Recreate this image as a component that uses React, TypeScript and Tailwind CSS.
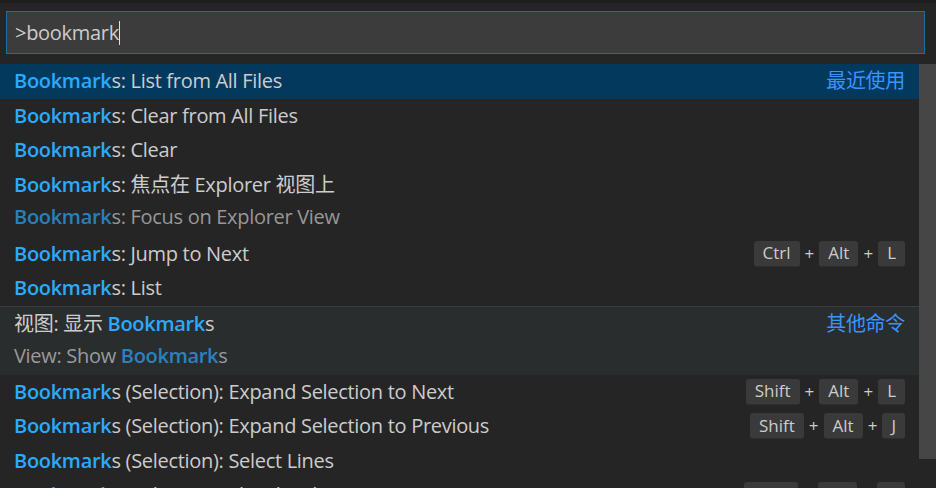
import React from 'react';

type Item = {
  pre?: string;
  hl: string;
  post: string;
  detail?: { pre: string; hl: string; post: string };
  keys?: string[];
  label?: string;
  selected?: boolean;
  hover?: boolean;
  separator?: boolean;
};

const items: Item[] = [
  { hl: 'Bookmark', post: 's: List from All Files', label: '最近使用', selected: true },
  { hl: 'Bookmark', post: 's: Clear from All Files' },
  { hl: 'Bookmark', post: 's: Clear' },
  { hl: 'Bookmark', post: 's: 焦点在 Explorer 视图上', detail: { pre: '', hl: 'Bookmark', post: 's: Focus on Explorer View' } },
  { hl: 'Bookmark', post: 's: Jump to Next', keys: ['Ctrl', 'Alt', 'L'] },
  { hl: 'Bookmark', post: 's: List' },
  { pre: '视图: 显示 ', hl: 'Bookmark', post: 's', detail: { pre: 'View: Show ', hl: 'Bookmark', post: 's' }, label: '其他命令', hover: true, separator: true },
  { hl: 'Bookmark', post: 's (Selection): Expand Selection to Next', keys: ['Shift', 'Alt', 'L'] },
  { hl: 'Bookmark', post: 's (Selection): Expand Selection to Previous', keys: ['Shift', 'Alt', 'J'] },
  { hl: 'Bookmark', post: 's (Selection): Select Lines' },
  { hl: 'Bookmark', post: 's (Selection): Shrink Selection', keys: ['Shift', 'Alt', 'K'] },
];

function Keys({ keys }: { keys: string[] }) {
  return (
    <div className="flex items-center text-[17px] tracking-normal text-[#cccccc]">
      {keys.map((k, i) => (
        <React.Fragment key={k + i}>
          {i > 0 && <span className="mx-[5px]">+</span>}
          <span className="h-[26px] px-[9px] flex items-center rounded-[3px] bg-[#3a3a3b] border-b border-[#2f2f30]">{k}</span>
        </React.Fragment>
      ))}
    </div>
  );
}

function Row({ item }: { item: Item }) {
  const bg = item.selected ? 'bg-[#04395e]' : item.hover ? 'bg-[#2a2d2e]' : '';
  const two = !!item.detail;
  return (
    <div className={`${bg} ${item.separator ? 'border-t border-[#3b3e40]' : ''} ${two ? 'h-[69px]' : 'h-[34.5px]'} pl-[14px] pr-[14px] flex flex-col shrink-0`}>
      <div className="h-[34px] flex items-center justify-between">
        <div className="text-[#cccccc] whitespace-pre">
          {item.pre}
          <span className="font-semibold text-[#2aaaff]">{item.hl}</span>
          {item.post}
        </div>
        {item.keys && <Keys keys={item.keys} />}
        {item.label && <div className="text-[#3794ff]">{item.label}</div>}
      </div>
      {item.detail && (
        <div className="h-[32px] flex items-center -mt-[1px]">
          <div className="text-[#cccccc]/70 whitespace-pre">
            {item.detail.pre}
            <span className="font-semibold text-[#2aaaff]/70">{item.detail.hl}</span>
            {item.detail.post}
          </div>
        </div>
      )}
    </div>
  );
}

export default function App() {
  return (
    <div
      className="w-[936px] h-[488px] bg-[#252526] overflow-hidden flex flex-col text-[20px] tracking-[-0.3px]"
      style={{ fontFamily: '"Open Sans", "Noto Sans CJK SC", sans-serif' }}
    >
      <div className="h-[3px] bg-[#1e1e1e] shrink-0" />
      <div className="pt-[8px] pl-[6px] pr-[11px] pb-[10px] shrink-0">
        <div className="h-[43px] bg-[#3c3c3c] border border-[#1a6fa8] flex items-center pl-[8px]">
          <span className="text-[#cccccc]">&gt;bookmark</span>
          <span className="w-[1px] h-[24px] bg-[#e0e0e0]" />
        </div>
      </div>
      <div className="flex flex-1 min-h-0">
        <div className="flex-1 flex flex-col overflow-hidden">
          {items.map((it, i) => (
            <Row key={i} item={it} />
          ))}
        </div>
        <div className="w-[17px] shrink-0">
          <div className="h-[395px] bg-[#4a4a4a]/90" />
        </div>
      </div>
    </div>
  );
}
